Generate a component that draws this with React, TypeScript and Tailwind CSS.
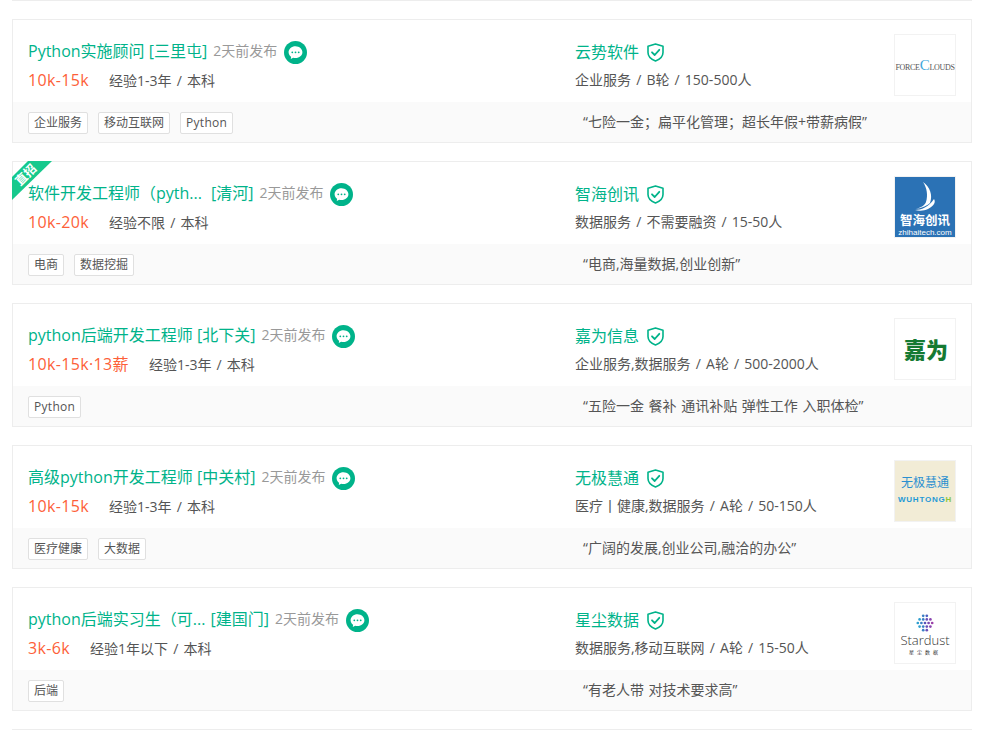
import React from "react";

const FONT = '"Open Sans", "Noto Sans CJK SC", sans-serif';

function ChatIcon() {
  return (
    <svg width="23" height="23" viewBox="0 0 23 23" className="shrink-0">
      <circle cx="11.5" cy="11.5" r="11.5" fill="#00b38a" />
      <path d="M11.5 5.2c-3.9 0-6.9 2.7-6.9 6 0 1.9 1 3.5 2.5 4.6l-.3 2.2 2.4-1.3c.7.2 1.5.3 2.3.3 3.9 0 6.9-2.6 6.9-5.8s-3-6-6.9-6z" fill="#fff" />
      <circle cx="8.3" cy="11.3" r="0.9" fill="#00b38a" />
      <circle cx="11.5" cy="11.3" r="0.9" fill="#00b38a" />
      <circle cx="14.7" cy="11.3" r="0.9" fill="#00b38a" />
    </svg>
  );
}

function ShieldIcon() {
  return (
    <svg width="17" height="19" viewBox="0 0 17 19" fill="none" className="shrink-0">
      <path d="M8.5 1 L16 3.2 V9.5 C16 13.5 12.5 16.5 8.5 18 C4.5 16.5 1 13.5 1 9.5 V3.2 Z" stroke="#00b38a" strokeWidth="1.6" strokeLinejoin="round" />
      <path d="M5 9.3 L7.7 12 L12.3 6.8" stroke="#00b38a" strokeWidth="1.8" strokeLinecap="round" strokeLinejoin="round" />
    </svg>
  );
}

function LogoForce() {
  return (
    <div className="flex h-full w-full items-center justify-center bg-white">
      <span className="text-[8px] leading-none tracking-[-0.3px] whitespace-nowrap text-[#555]" style={{ fontFamily: '"Liberation Serif", serif' }}>
        FORCE<span className="text-[15px] leading-none text-[#3fa9dc]">C</span>LOUDS
      </span>
    </div>
  );
}

function LogoZhihai() {
  return (
    <div className="flex h-full w-full flex-col items-center bg-[#2b72b5] text-white">
      <svg width="30" height="32" viewBox="0 0 30 32" className="mt-[4px] shrink-0">
        <path d="M13 1 C20 6 23 14 20 22 C18 24 12 27 6 28 C12 26 15 24 16 21 C18 14 17 7 13 1 Z" fill="#fff" />
        <path d="M24 18 C26 21 24 25 18 28 C14 30 9 30 5 29 C11 29 19 26 24 18 Z" fill="#fff" />
      </svg>
      <span className="mt-[1px] text-[12.5px] leading-[14px] font-bold whitespace-nowrap">智海创讯</span>
      <span className="text-[8px] leading-[9px] whitespace-nowrap" style={{ fontFamily: '"Liberation Sans", sans-serif' }}>zhihaitech.com</span>
    </div>
  );
}

function LogoJiawei() {
  return (
    <div className="flex h-full w-full items-center justify-center bg-white pl-[2px]">
      <span className="text-[22px] leading-none font-black whitespace-nowrap text-[#157a33]">嘉为</span>
    </div>
  );
}

function LogoWuji() {
  return (
    <div className="flex h-full w-full flex-col items-center justify-center bg-[#f2ecd6]">
      <span className="text-[12px] leading-[14px] whitespace-nowrap text-[#2a8fd0]">无极慧通</span>
      <span className="mt-[4px] text-[8px] leading-[12px] font-bold tracking-[0.8px] whitespace-nowrap" style={{ fontFamily: '"Liberation Sans", sans-serif' }}>
        <span className="text-[#1f9ad6]">WUHTONG</span><span className="text-[#8cc63f]">H</span>
      </span>
    </div>
  );
}

function LogoStardust() {
  const dots: [number, number, string][] = [
    [8, 2, "#3b7fc4"], [12, 2, "#4a5fc0"], [4, 6, "#2f9fd0"], [8, 6, "#3b7fc4"], [12, 6, "#6a4fb8"], [16, 6, "#8a45b0"],
    [2, 10, "#2f9fd0"], [6, 10, "#3b7fc4"], [10, 10, "#5a55b8"], [14, 10, "#7a48b0"], [18, 10, "#9a40a8"],
    [4, 14, "#2f9fd0"], [8, 14, "#3b7fc4"], [12, 14, "#6a4fb8"], [16, 14, "#8a45b0"], [8, 18, "#3b7fc4"], [12, 18, "#6a4fb8"],
  ];
  return (
    <div className="flex h-full w-full flex-col items-center justify-center bg-white pt-[3px]">
      <svg width="18" height="18" viewBox="0 0 20 20" className="shrink-0">
        {dots.map(([x, y, c], i) => (
          <circle key={i} cx={x} cy={y} r="1.5" fill={c} />
        ))}
      </svg>
      <span className="mt-[1px] text-[13px] leading-[15px] font-light whitespace-nowrap text-[#333]">Stardust</span>
      <span className="text-[5px] leading-[8px] tracking-[3px] whitespace-nowrap text-[#333]">星尘数据</span>
    </div>
  );
}

type Job = {
  title: string;
  area: string;
  areaClass?: string;
  salary: string;
  exp: string;
  tags: string[];
  company: string;
  info: string;
  quote: string;
  logo: React.ReactNode;
  direct?: boolean;
};

const jobs: Job[] = [
  { title: "Python实施顾问", area: "[三里屯]", salary: "10k-15k", exp: "经验1-3年 / 本科", tags: ["企业服务", "移动互联网", "Python"], company: "云势软件", info: "企业服务 / B轮 / 150-500人", quote: "“七险一金；扁平化管理；超长年假+带薪病假”", logo: <LogoForce /> },
  { title: "软件开发工程师（pyth...", area: "[清河]", areaClass: "ml-[5px]", salary: "10k-20k", exp: "经验不限 / 本科", tags: ["电商", "数据挖掘"], company: "智海创讯", info: "数据服务 / 不需要融资 / 15-50人", quote: "“电商,海量数据,创业创新”", logo: <LogoZhihai />, direct: true },
  { title: "python后端开发工程师", area: "[北下关]", salary: "10k-15k·13薪", exp: "经验1-3年 / 本科", tags: ["Python"], company: "嘉为信息", info: "企业服务,数据服务 / A轮 / 500-2000人", quote: "“五险一金 餐补 通讯补贴 弹性工作 入职体检”", logo: <LogoJiawei /> },
  { title: "高级python开发工程师", area: "[中关村]", salary: "10k-15k", exp: "经验1-3年 / 本科", tags: ["医疗健康", "大数据"], company: "无极慧通", info: "医疗丨健康,数据服务 / A轮 / 50-150人", quote: "“广阔的发展,创业公司,融洽的办公”", logo: <LogoWuji /> },
  { title: "python后端实习生（可...", area: "[建国门]", areaClass: "ml-[1px]", salary: "3k-6k", exp: "经验1年以下 / 本科", tags: ["后端"], company: "星尘数据", info: "数据服务,移动互联网 / A轮 / 15-50人", quote: "“有老人带 对技术要求高”", logo: <LogoStardust /> },
];

function Card({ job }: { job: Job }) {
  return (
    <div className="relative h-[124px] border border-[#ededed] bg-white">
      {job.direct && (
        <div className="absolute -top-px -left-px h-[40px] w-[40px] bg-[#16c98d] [clip-path:polygon(16px_0,40px_0,0_39px,0_16px)]">
          <span className="absolute top-0 left-0 flex h-[28px] w-[28px] -rotate-45 items-center justify-center text-[12px] leading-none font-bold whitespace-nowrap text-white">
            直招
          </span>
        </div>
      )}
      <div className="flex h-[82px]">
        <div className="w-[562px] shrink-0 pt-[20px] pl-[15px]">
          <div className="flex h-[23px] items-center">
            <span className="text-[16px] leading-[23px] whitespace-nowrap text-[#00b38a]">
              {job.title} <span className={job.areaClass}>{job.area}</span>
            </span>
            <span className="mb-[2px] ml-[6px] text-[14px] leading-[23px] whitespace-nowrap text-[#999]">2天前发布</span>
            <span className="mt-[2px] ml-[6.5px]"><ChatIcon /></span>
          </div>
          <div className="mt-[6px] flex h-[22px] items-center">
            <span className="text-[16px] leading-[22px] tracking-[0.35px] whitespace-nowrap text-[#fd5f39]">{job.salary}</span>
            <span className="mt-[2px] ml-[20px] text-[14px] leading-[22px] whitespace-nowrap text-[#555] [word-spacing:1.5px]">{job.exp}</span>
          </div>
        </div>
        <div className="flex-1 pt-[21px]">
          <div className="flex h-[23px] items-center">
            <span className="text-[16px] leading-[23px] whitespace-nowrap text-[#00b38a]">{job.company}</span>
            <span className="ml-[8px]"><ShieldIcon /></span>
          </div>
          <div className="mt-[5px] text-[14px] leading-[21px] whitespace-nowrap text-[#555] [word-spacing:1.5px]">{job.info}</div>
        </div>
        <div className="mt-[14px] mr-[15px] h-[62px] w-[62px] shrink-0 overflow-hidden border border-[#f2f2f2]">
          {job.logo}
        </div>
      </div>
      <div className="flex h-[40px] bg-[#fafafa]">
        <div className="flex w-[562px] shrink-0 items-center gap-[10px] pt-[2px] pl-[15px]">
          {job.tags.map((t) => (
            <span key={t} className={`rounded-[2px] border border-[#e0e0e0] bg-white px-[5px] text-[12px] leading-[20px] whitespace-nowrap text-[#555] ${t === "Python" ? "tracking-[0.3px]" : ""}`}>
              {t}
            </span>
          ))}
        </div>
        <div className="flex-1 pt-[9px] pl-[8px] text-[14px] leading-[21px] whitespace-nowrap text-[#555] [word-spacing:1px]">{job.quote}</div>
      </div>
    </div>
  );
}

export default function App() {
  return (
    <div className="h-[730px] w-[993px] overflow-hidden bg-white px-[12px]" style={{ fontFamily: FONT }}>
      <div className="flex w-[960px] flex-col">
        <div className="h-px bg-[#ededed]" />
        <div className="mt-[18px] flex flex-col gap-[18px]">
          {jobs.map((j) => (
            <Card key={j.company} job={j} />
          ))}
        </div>
        <div className="mt-[18px] h-px bg-[#ededed]" />
      </div>
    </div>
  );
}
